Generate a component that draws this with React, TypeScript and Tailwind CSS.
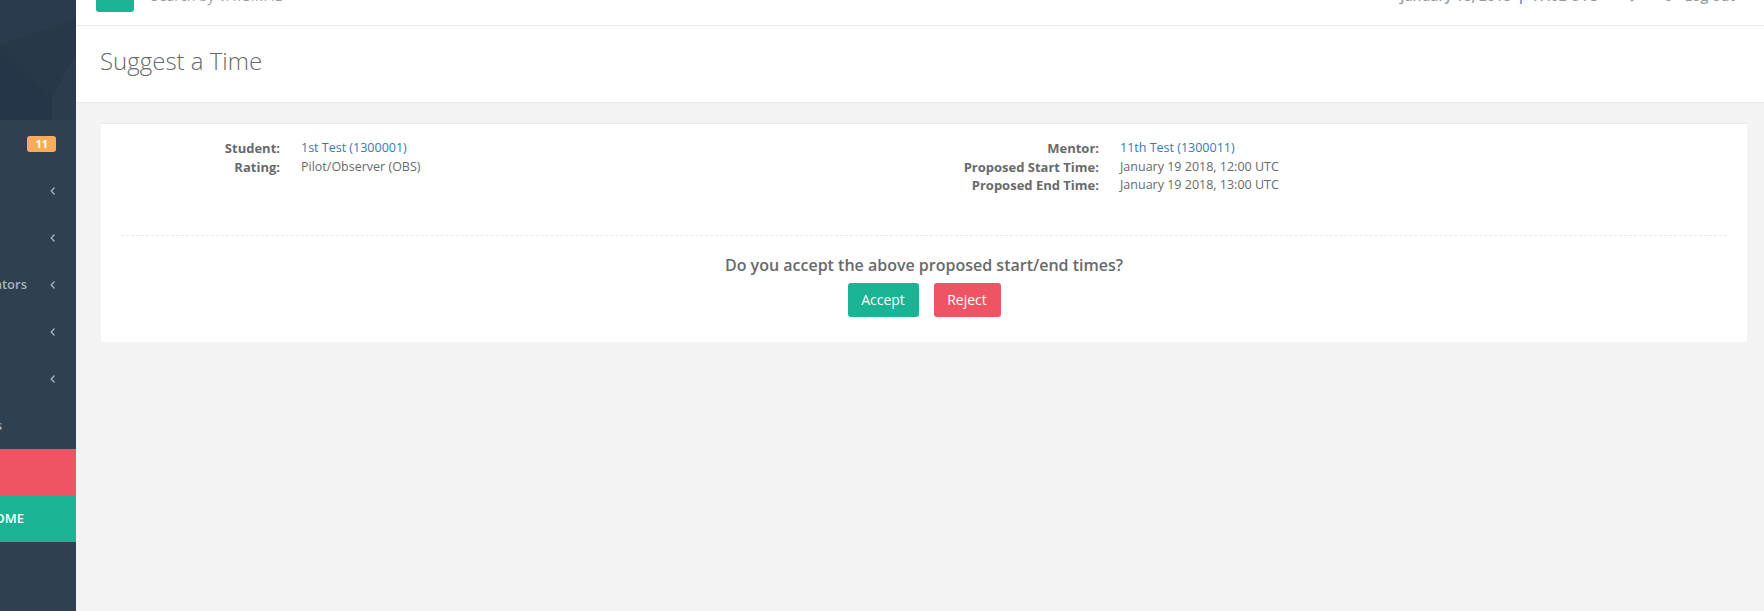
import { Bell, LogOut, Menu } from "lucide-react";

const navItems = [
    { label: "Dashboard", badge: "11", endAt: "mr-[90px]" },
    { label: "Training", chevron: true, endAt: "mr-[90px]" },
    { label: "Scheduling", chevron: true, endAt: "mr-[90px]" },
    { label: "Administrators", chevron: true, endAt: "mr-[49px]" },
    { label: "Reports", chevron: true, endAt: "mr-[90px]" },
    { label: "Settings", chevron: true, endAt: "mr-[90px]" },
    { label: "Resources", endAt: "mr-[74px]" },
];

function Chevron() {
    return (
        <svg width="6" height="9" viewBox="0 0 6 9" className="absolute right-[20px] top-1/2 -translate-y-1/2">
            <polyline points="4.5,1 1.2,4.5 4.5,8" fill="none" stroke="#a7b1c2" strokeWidth="1.3" />
        </svg>
    );
}

function Sidebar() {
    return (
        <aside className="w-[76px] shrink-0 bg-[#2f4050] overflow-hidden flex flex-col">
            {/* profile header with pattern */}
            <div className="h-[120px] bg-[#283849] relative overflow-hidden">
                <svg width="76" height="120" viewBox="0 0 76 120" className="absolute inset-0">
                    <polygon points="0,0 76,0 76,20 0,45" fill="#2a3b4d" />
                    <polygon points="0,45 52,98 52,120 0,120" fill="#25354a" opacity="0.6" />
                    <polygon points="52,98 72,60 76,60 76,120 52,120" fill="#2c3e50" opacity="0.7" />
                </svg>
            </div>
            {navItems.map((item, i) => (
                <div key={i} className="relative h-[47px] flex items-center justify-end">
                    <span className={`whitespace-nowrap text-[13px] font-semibold text-[#a7b1c2] ${item.endAt}`}>
                        {item.label}
                    </span>
                    {item.badge && (
                        <span className="absolute right-[20px] top-1/2 -translate-y-1/2 rounded-[3px] bg-[#f8ac59] px-[8px] text-[11px] font-bold leading-[16px] text-white">
                            {item.badge}
                        </span>
                    )}
                    {item.chevron && <Chevron />}
                </div>
            ))}
            <div className="h-[47px] bg-[#ed5565] flex items-center justify-end">
                <span className="mr-[90px] whitespace-nowrap text-[13px] font-semibold text-white">Help</span>
            </div>
            <div className="h-[46px] bg-[#1ab394] flex items-center justify-end">
                <span className="mr-[52px] whitespace-nowrap text-[13px] font-semibold uppercase text-white">Return Home</span>
            </div>
        </aside>
    );
}

function TopBar() {
    return (
        <div className="-mt-[35px] h-[61px] shrink-0 bg-white border-b border-[#e7eaec] flex items-center">
            <button className="ml-[20px] h-[34px] w-[38px] rounded-[3px] bg-[#1ab394] flex items-center justify-center text-white">
                <Menu size={14} />
            </button>
            <span className="ml-[17px] text-[14px] text-[#999c9e]">Search by VATSIM ID</span>
            <div className="ml-auto mr-[29px] flex items-center text-[14px] font-semibold text-[#999c9e]">
                <span>January 18, 2018</span>
                <span className="mx-[6px] text-[#337ab7]">|</span>
                <span>17:02 UTC</span>
                <Bell size={14} className="ml-[28px]" />
                <LogOut size={13} className="ml-[26px]" />
                <span className="ml-[6px]">Log out</span>
            </div>
        </div>
    );
}

function Row({ label, children, link }: { label: string; children: React.ReactNode; link?: boolean }) {
    return (
        <div className="flex leading-[18.57px]">
            <span className="w-[159px] shrink-0 text-right font-bold">{label}</span>
            <span className={`ml-[21px] text-[12.5px] ${link ? "text-[#337ab7]" : ""}`}>{children}</span>
        </div>
    );
}

export default function App() {
    return (
        <div className="flex h-[611px] w-full overflow-hidden bg-[#f3f3f4] font-['Open_Sans',sans-serif] text-[#676a6c]">
            <Sidebar />
            <main className="flex-1 flex flex-col min-w-0">
                <TopBar />
                <div className="h-[77px] shrink-0 bg-white border-b border-[#e7eaec] pl-[24px] pt-[18px]">
                    <h2 className="text-[24px] font-light leading-[33px]">Suggest a Time</h2>
                </div>
                <div className="pl-[25px] pr-[17px] pt-[20px]">
                    <div className="bg-white border-t border-[#e7eaec] px-[20px] pt-[15px] pb-[25px] text-[13px]">
                        <div className="grid grid-cols-2 gap-x-[32px]">
                            <div>
                                <Row label="Student:" link>1st Test (1300001)</Row>
                                <Row label="Rating:">Pilot/Observer (OBS)</Row>
                            </div>
                            <div>
                                <Row label="Mentor:" link>11th Test (1300011)</Row>
                                <Row label="Proposed Start Time:">January 19 2018, 12:00 UTC</Row>
                                <Row label="Proposed End Time:">January 19 2018, 13:00 UTC</Row>
                            </div>
                        </div>
                        <div className="mt-[40px] border-t border-dashed border-[#e7eaec]" />
                        <div className="mt-[18px] text-center">
                            <p className="text-[16px] font-semibold leading-[22.86px]">
                                Do you accept the above proposed start/end times?
                            </p>
                            <div className="mt-[6px] flex justify-center gap-[15px]">
                                <button className="h-[34px] w-[71px] rounded-[3px] bg-[#1ab394] text-[14px] text-white">
                                    Accept
                                </button>
                                <button className="h-[34px] w-[67px] rounded-[3px] bg-[#ed5565] text-[14px] text-white">
                                    Reject
                                </button>
                            </div>
                        </div>
                    </div>
                </div>
            </main>
        </div>
    );
}
